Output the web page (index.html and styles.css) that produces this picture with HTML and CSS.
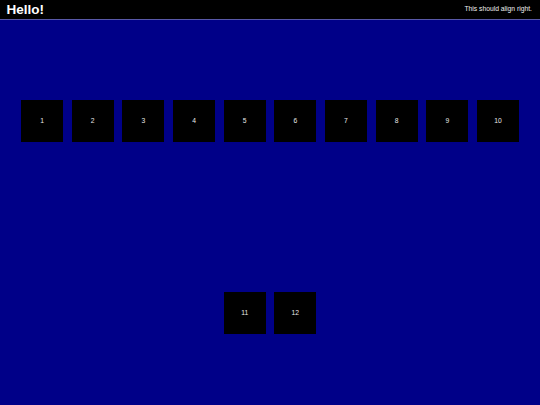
FILE: index.html
```html
<!DOCTYPE html>
<html>
<head>
<meta charset="utf-8">
<title>Hello</title>
<link rel="stylesheet" href="styles.css">
</head>
<body>
<header class="topbar">
  <h1 class="title">Hello!</h1>
  <span class="note">This should align right.</span>
</header>
<main class="grid">
  <div class="box">1</div>
  <div class="box">2</div>
  <div class="box">3</div>
  <div class="box">4</div>
  <div class="box">5</div>
  <div class="box">6</div>
  <div class="box">7</div>
  <div class="box">8</div>
  <div class="box">9</div>
  <div class="box">10</div>
  <div class="box">11</div>
  <div class="box">12</div>
</main>
</body>
</html>
```
FILE: styles.css
```css
html, body {
  margin: 0;
  padding: 0;
  height: 100%;
  overflow: hidden;
  background: #000088;
  font-family: "Liberation Sans", Arial, sans-serif;
}

.topbar {
  display: flex;
  justify-content: space-between;
  align-items: center;
  height: 19px;
  padding: 0 8px 0 6.5px;
  background: #000;
  border-bottom: 1px solid #5858a8;
  color: #fff;
}

.title {
  margin: 0;
  font-size: 13.5px;
  font-weight: bold;
  line-height: 1;
}

.note {
  font-size: 6.75px;
  line-height: 1;
  color: #f0f0f0;
}

.grid {
  display: flex;
  flex-wrap: wrap;
  justify-content: center;
  align-content: space-around;
  align-items: center;
  height: 384px;
  padding-top: 4.8px;
}

.box {
  display: flex;
  align-items: center;
  justify-content: center;
  width: 42px;
  height: 42px;
  margin: 0 4.33px;
  background: #000;
  color: #e8e8e8;
  font-size: 6.75px;
}
```
